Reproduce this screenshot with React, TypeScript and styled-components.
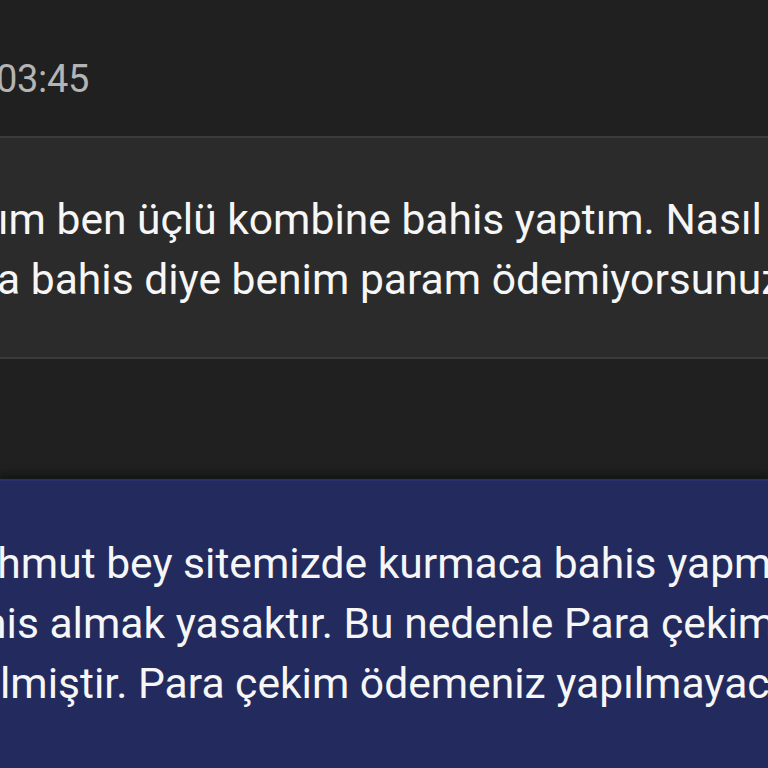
import React from "react";
import styled, { createGlobalStyle } from "styled-components";

const GlobalStyle = createGlobalStyle`
  html, body {
    margin: 0;
    padding: 0;
    background: #202020;
  }
  body {
    font-family: Roboto, "Noto Sans", "Liberation Sans", sans-serif;
    overflow: hidden;
  }
`;

const Screen = styled.div`
  width: 768px;
  height: 768px;
  overflow: hidden;
  display: flex;
  flex-direction: column;
  background: #202020;

  & > * {
    flex-shrink: 0;
  }
`;

const TimeRow = styled.div`
  padding: 49px 0 27px;
  font-size: 38px;
  line-height: 60px;
  letter-spacing: -0.3px;
  color: #b4b4b4;
  white-space: nowrap;
`;

const Bubble = styled.div<{ $variant: "user" | "agent" }>`
  display: flex;
  flex-direction: column;
  color: #f6f6f6;
  font-size: 42.6px;
  line-height: 60px;
  white-space: nowrap;
  overflow: hidden;
  background: ${(p) => (p.$variant === "user" ? "#2b2b2b" : "#232b5e")};
  border-top: 2px solid ${(p) => (p.$variant === "user" ? "#3b3b3b" : "#26306a")};
  border-bottom: 2px solid ${(p) => (p.$variant === "user" ? "#3b3b3b" : "#232b5e")};
  padding: ${(p) => (p.$variant === "user" ? "51px 0 48px" : "52px 0 80px")};
  box-shadow: ${(p) =>
    p.$variant === "agent" ? "0 -6px 6px rgba(10, 16, 12, 0.55)" : "none"};
`;

const Gap = styled.div`
  height: 120px;
`;

const Line = styled.div<{ $shift: number }>`
  margin-left: ${(p) => p.$shift}px;
`;

const userLines = [
  { text: "ım ben üçlü kombine bahis yaptım. Nasıl olur", shift: -2 },
  { text: "a bahis diye benim param ödemiyorsunuz", shift: -3 },
];

const agentLines = [
  { text: "Mahmut bey sitemizde kurmaca bahis yapmak", shift: -63 },
  { text: "bahis almak yasaktır. Bu nedenle Para çekim", shift: -64 },
  { text: "edilmiştir. Para çekim ödemeniz yapılmayacaktır.", shift: -57 },
];

export default function App() {
  return (
    <Screen>
      <GlobalStyle />
      <TimeRow>
        <Line $shift={-4}>03:45</Line>
      </TimeRow>
      <Bubble $variant="user">
        {userLines.map((l) => (
          <Line key={l.text} $shift={l.shift}>
            {l.text}
          </Line>
        ))}
      </Bubble>
      <Gap />
      <Bubble $variant="agent">
        {agentLines.map((l) => (
          <Line key={l.text} $shift={l.shift}>
            {l.text}
          </Line>
        ))}
      </Bubble>
    </Screen>
  );
}
